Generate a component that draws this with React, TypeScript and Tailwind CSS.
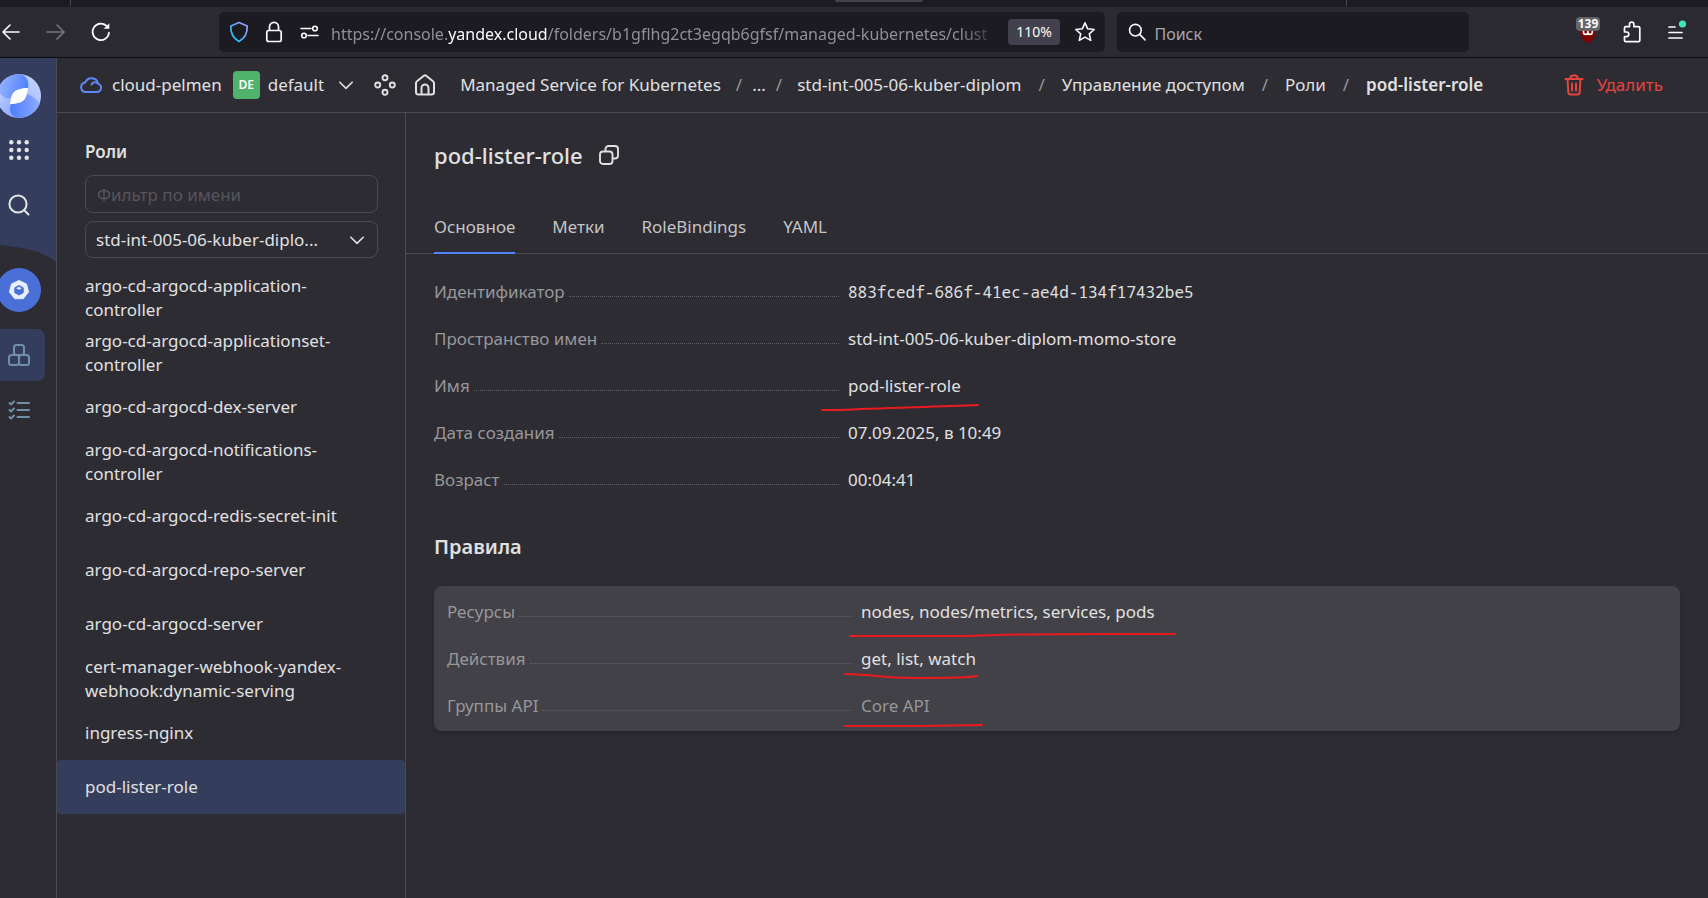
import React, { ReactNode } from "react";

const roles = [
  { name: "argo-cd-argocd-application-controller", long: true },
  { name: "argo-cd-argocd-applicationset-controller", long: true },
  { name: "argo-cd-argocd-dex-server" },
  { name: "argo-cd-argocd-notifications-controller", long: true },
  { name: "argo-cd-argocd-redis-secret-init" },
  { name: "argo-cd-argocd-repo-server" },
  { name: "argo-cd-argocd-server" },
  { name: "cert-manager-webhook-yandex-webhook:dynamic-serving", long: true },
  { name: "ingress-nginx" },
  { name: "pod-lister-role", active: true },
];

function Chevron({ size = 18 }: { size?: number }) {
  return (
    <svg width={size} height={size} viewBox="0 0 16 16" fill="none" stroke="currentColor" strokeWidth="1.4" strokeLinecap="round" strokeLinejoin="round" className="shrink-0">
      <path d="M2.5 5.5 8 11l5.5-5.5" />
    </svg>
  );
}

function Mark({ d, place }: { d: string; place: string }) {
  return (
    <svg width="332" height="10" viewBox="0 0 332 10" fill="none" stroke="#e91b1e" strokeWidth="2" strokeLinecap="round" className={`pointer-events-none absolute ${place}`} aria-hidden="true">
      <path d={d} />
    </svg>
  );
}

function Row({ label, children }: { label: string; children: ReactNode }) {
  return (
    <div className="flex h-[22px] leading-[22px]">
      <dt className="flex w-[405px] shrink-0 items-baseline gap-1 text-[#97979a]">
        {label}
        <span className="mb-[6px] h-px flex-1 self-end border-b border-dotted border-[#5f5e64]" />
      </dt>
      <dd className="relative ml-[9px]">{children}</dd>
    </div>
  );
}

function BrowserBar() {
  return (
    <header className="shrink-0 border-b border-[#0c0c0d] bg-[#2b2a33] font-['Noto_Sans',sans-serif] text-[#fbfbfe]">
      <div className="relative h-[7px] bg-[#1c1b22]">
        <div className="absolute left-[70px] top-0 h-[6px] w-px bg-[#4a4950]" />
        <div className="absolute left-[835px] top-0 h-[2px] w-[88px] rounded-b bg-[#42414d]" />
        <div className="absolute left-[1346px] top-0 h-[6px] w-px bg-[#4a4950]" />
      </div>
      <div className="flex h-[50px] items-center">
        <nav className="flex w-[219px] shrink-0 items-center gap-[25px]">
          <button aria-label="Назад">
            <svg width="20" height="20" viewBox="0 0 20 20" fill="none" stroke="currentColor" strokeWidth="1.6" strokeLinecap="round" strokeLinejoin="round"><path d="M19 10H3M10 3l-7 7 7 7" /></svg>
          </button>
          <button aria-label="Вперёд" className="text-[#77767d]">
            <svg width="20" height="20" viewBox="0 0 20 20" fill="none" stroke="currentColor" strokeWidth="1.6" strokeLinecap="round" strokeLinejoin="round"><path d="M2 10h17M12 3l7 7-7 7" /></svg>
          </button>
          <button aria-label="Обновить">
            <svg width="22" height="22" viewBox="0 0 22 22" fill="none" stroke="currentColor" strokeWidth="1.7" strokeLinecap="round" strokeLinejoin="round"><path d="M19 11.5A8.2 8.2 0 1 1 17 5.5" /><path d="M19.3 2.2v5.6h-5.6z" fill="currentColor" stroke="none" /></svg>
          </button>
        </nav>
        <div className="flex h-10 min-w-0 flex-1 items-center rounded-[5px] bg-[#1c1b22] pl-[9px] pr-[9px]">
          <svg width="22" height="22" viewBox="0 0 22 22" fill="none" className="shrink-0">
            <defs><linearGradient id="shield" x1="1" y1="0" x2="0" y2="1"><stop stopColor="#b19cff" /><stop offset=".5" stopColor="#5aa7f5" /><stop offset="1" stopColor="#00ddff" /></linearGradient></defs>
            <path d="M11 1.5 19.2 5c.3 6.5-2 12-8.2 15.500C4.800 17 2.500 11.500 2.800 5z" stroke="url(#shield)" strokeWidth="1.7" strokeLinejoin="round" />
          </svg>
          <svg width="22" height="22" viewBox="0 0 22 22" fill="none" stroke="currentColor" strokeWidth="1.7" className="ml-[13px] shrink-0"><rect x="3.8" y="9.5" width="14.4" height="11" rx="2" /><path d="M6.5 9.500V5.800a4.500 4.500 0 0 1 9 0v3.700" /></svg>
          <svg width="20" height="20" viewBox="0 0 20 20" fill="none" stroke="currentColor" strokeWidth="1.6" strokeLinecap="round" className="ml-[14px] shrink-0"><path d="M2 6.500h10M9 13.500h10" /><circle cx="16" cy="6.5" r="2.3" /><circle cx="5" cy="13.5" r="2.3" /></svg>
          <div className="ml-3 min-w-0 flex-1 overflow-hidden whitespace-nowrap pt-[3px] text-base leading-6 text-[#8f8f95] [mask-image:linear-gradient(to_right,#000_94%,transparent)]">
            https://console.<span className="text-[#fbfbfe]">yandex.cloud</span>/folders/b1gflhg2ct3egqb6gfsf/managed-kubernetes/clust
          </div>
          <button className="ml-2 h-[26px] w-[52px] shrink-0 rounded bg-[#42414d] text-sm">110%</button>
          <button aria-label="Добавить в закладки" className="ml-[14px] shrink-0">
            <svg width="22" height="22" viewBox="0 0 22 22" fill="none" stroke="currentColor" strokeWidth="1.6" strokeLinejoin="round"><path d="m11 1.800 2.700 6 6.500.7-4.900 4.400 1.400 6.500L11 16.100l-5.700 3.300 1.400-6.500L1.800 8.500l6.500-.7z" /></svg>
          </button>
        </div>
        <label className="ml-3 flex h-10 w-[352px] shrink-0 items-center rounded-[5px] bg-[#1c1b22] pl-[11px]">
          <svg width="20" height="20" viewBox="0 0 20 20" fill="none" stroke="currentColor" strokeWidth="1.7" strokeLinecap="round"><circle cx="8" cy="8" r="6.3" /><path d="m12.600 12.600 5.900 5.900" /></svg>
          <input aria-label="Поиск" placeholder="Поиск" className="ml-2 w-full bg-transparent pt-[3px] text-base outline-none placeholder:text-[#a6a6ab]" />
        </label>
        <div className="ml-[107px] flex w-[132px] shrink-0 items-center gap-[21px]">
          <button aria-label="Расширение, 139" className="relative h-7 w-6">
            <svg width="24" height="28" viewBox="0 0 24 28" fill="none"><path d="M4 10h16c.4 7-2 12-8 15.500C6 22 3.600 17 4 10z" fill="#7f0505" /><path d="M7.500 12v2.200a2.200 2.200 0 0 0 4.400 0V12m0 2.200a2.200 2.200 0 0 0 4.400 0V12" stroke="#fff" strokeWidth="1.6" /></svg>
            <span className="absolute -top-px left-0 h-[14px] w-6 rounded-sm bg-[#666] text-center text-xs font-bold leading-[14px]">139</span>
          </button>
          <button aria-label="Расширения">
            <svg width="22" height="22" viewBox="0 0 22 22" fill="none" stroke="currentColor" strokeWidth="1.7" strokeLinejoin="round"><path d="M3.500 9.500V7c0-.8.5-1.300 1.300-1.300H8.500V3.300a2.200 2.200 0 0 1 4.400 0v2.400h4.600c.8 0 1.300.5 1.300 1.300v12.400c0 .8-.5 1.300-1.300 1.300H4.800c-.8 0-1.300-.5-1.300-1.300v-3.800h2a2.300 2.300 0 0 0 0-4.600H3.500z" /></svg>
          </button>
          <button aria-label="Меню">
            <svg width="24" height="24" viewBox="0 0 24 24" fill="none" stroke="currentColor" strokeWidth="1.7" strokeLinecap="round"><path d="M5 7h6M5 12.500h13M5 18h13" /><circle cx="18.5" cy="4" r="3.6" fill="#3fe8ae" stroke="none" /></svg>
          </button>
        </div>
      </div>
    </header>
  );
}

function Rail() {
  return (
    <nav className="relative flex w-[57px] shrink-0 flex-col items-start border-r border-[#4b4a51]">
      <svg width="56" height="204" viewBox="0 0 56 204" className="absolute left-0 top-0" aria-hidden="true"><path d="M0 0h56v204C47 197 37 193 27 191 17 189 9 188 0 187z" fill="#343d5c" /></svg>
      <a href="#home" aria-label="Главная" className="relative mt-4">
        <svg width="41" height="44" viewBox="3 0 41 44">
          <defs>
            <linearGradient id="lgA" x1="0" y1="0" x2="1" y2="1"><stop stopColor="#c3d2ff" /><stop offset="1" stopColor="#86a5ff" /></linearGradient>
            <linearGradient id="lgB" x1="0" y1=".3" x2="1" y2=".5"><stop stopColor="#9db7ff" /><stop offset="1" stopColor="#4d80fa" /></linearGradient>
            <linearGradient id="lgC" x1="0" y1=".5" x2="1" y2=".5"><stop stopColor="#4d7dfb" /><stop offset="1" stopColor="#90acff" /></linearGradient>
            <linearGradient id="lgD" x1="0" y1="1" x2="1" y2="0"><stop stopColor="#8eabff" /><stop offset="1" stopColor="#c6d4ff" /></linearGradient>
            <clipPath id="disc"><circle cx="22" cy="22" r="22" /></clipPath>
          </defs>
          <g clipPath="url(#disc)">
            <path d="M0 0h44v44H0z" fill="url(#lgD)" />
            <path d="M0 14C6 4 14 0 24 0c7 3 8 8 7 14-8 0-14 3-17 9-2 4-9 2-14-9z" fill="url(#lgB)" />
            <path d="M0 14c3 8 9 12 15 10-1 6-2 13 3 20C6 42 0 34 0 22z" fill="url(#lgA)" />
            <path d="M44 30c-6 10-14 14-24 14-7-3-8-8-6-14 8 0 14-4 16-10 4 1 9 5 14 10z" fill="url(#lgC)" />
          </g>
          <path d="M31 14c-8 0-14 2-16 7-1 3-1.500 6-2 9 8 0 14-2 16-7 1-3 1.500-6 2-9z" fill="#fff" />
        </svg>
      </a>
      <button aria-label="Все сервисы" className="relative ml-2 mt-[21px]">
        <svg width="22" height="22" viewBox="0 0 22 22" fill="#e4e4e6">
          {[3.3, 11, 18.7].map((y) => [3.3, 11, 18.7].map((x) => <circle key={`${x}-${y}`} cx={x} cy={y} r="2.2" />))}
        </svg>
      </button>
      <button aria-label="Поиск по консоли" className="relative ml-2 mt-[33px]">
        <svg width="22" height="22" viewBox="0 0 22 22" fill="none" stroke="#e4e4e6" strokeWidth="2" strokeLinecap="round"><circle cx="10" cy="10" r="8.6" /><path d="m16.300 16.300 4.200 4.200" /></svg>
      </button>
      <a href="#kubernetes" aria-label="Managed Service for Kubernetes" className="mt-[52px]">
        <svg width="41" height="44" viewBox="3 0 41 44"><circle cx="22" cy="22" r="22" fill="#4a70d8" /><path d="m22 12.500 7.500 3.500 2 8-5.200 6.700h-8.600L12.500 24l2-8z" fill="#e9eefc" stroke="#e9eefc" strokeLinejoin="round" /><path d="m22 17.500 4.200 2.300v4.900L22 27l-4.200-2.300v-4.900z" fill="#4a70d8" stroke="#4a70d8" strokeLinejoin="round" /><path d="m22 18.800 2.800 1.500L22 21.800l-2.800-1.500z" fill="#e9eefc" /></svg>
      </a>
      <a href="#cluster" aria-label="Кластеры" className="mt-[17px] flex h-[52px] w-[45px] items-center rounded-r-lg bg-[#343d5c] pl-[7px]">
        <svg width="24" height="24" viewBox="0 0 24 24" fill="none" stroke="#6f90a8" strokeWidth="2"><rect x="7" y="2" width="10" height="10" rx="2.5" /><rect x="2" y="12" width="10" height="10" rx="2.5" /><rect x="12" y="12" width="10" height="10" rx="2.5" /></svg>
      </a>
      <a href="#operations" aria-label="Операции" className="ml-2 mt-[18px]">
        <svg width="22" height="22" viewBox="0 0 22 22" fill="none" stroke="#6f90a8" strokeWidth="2" strokeLinecap="round" strokeLinejoin="round"><path d="M9.500 4h11.500M9.500 11h11.500M9.500 18h11.500M1.500 4l1.500 1.500L6 2.500M1.500 11l1.500 1.500L6 9.500M1.500 18l1.500 1.500L6 16.500" /></svg>
      </a>
    </nav>
  );
}

function Slash() {
  return <span className="text-[#97979a]">/</span>;
}

function TopBar() {
  return (
    <div className="flex h-[55px] shrink-0 items-center whitespace-nowrap border-b border-[#4b4a51] pl-[22px] pr-[45px]">
      <svg width="24" height="22" viewBox="0 0 24 22" fill="none" stroke="#5c88f5" strokeWidth="2" strokeLinecap="round" strokeLinejoin="round" className="shrink-0"><path d="M6.200 18h11.500a4.300 4.300 0 0 0 1.300-8.400A6.600 6.600 0 0 0 6.300 8.500 4.800 4.800 0 0 0 6.200 18z" /><path d="M12.500 10.500a4 4 0 0 1 6.500-.9" /></svg>
      <a href="#cloud" className="ml-[9px]">cloud-pelmen</a>
      <span className="ml-[11px] flex h-7 w-[27px] shrink-0 items-center justify-center rounded bg-[#50b36c] text-xs font-semibold text-white">DE</span>
      <button className="ml-2 flex items-center gap-[13px]">default <Chevron /></button>
      <button aria-label="Ресурсы" className="ml-[19px] shrink-0">
        <svg width="22" height="22" viewBox="0 0 22 22" fill="none" stroke="currentColor" strokeWidth="1.9"><circle cx="11" cy="3.7" r="2.5" /><circle cx="11" cy="18.3" r="2.5" /><circle cx="3.7" cy="11" r="2.5" /><circle cx="18.3" cy="11" r="2.5" /></svg>
      </button>
      <a href="#root" aria-label="Начало" className="ml-[18px] shrink-0">
        <svg width="22" height="22" viewBox="0 0 22 22" fill="none" stroke="currentColor" strokeWidth="2" strokeLinejoin="round"><path d="M2 9.200c0-.8.3-1.500 1-2L9.800 1.800c.7-.5 1.700-.5 2.400 0L19 7.200c.7.500 1 1.200 1 2V18a2.500 2.500 0 0 1-2.500 2.500h-13A2.500 2.500 0 0 1 2 18z" /><path d="M7.500 20.500V14a3.500 3.500 0 0 1 7 0v6.500" /></svg>
      </a>
      <nav className="ml-6 flex items-center">
        <a href="#service">Managed Service for Kubernetes</a>
        <span className="mx-[15px] flex gap-[10px]"><Slash /><button>...</button><Slash /></span>
        <a href="#diplom">std-int-005-06-kuber-diplom</a>
        <span className="mx-[17px]"><Slash /></span>
        <a href="#access">Управление доступом</a>
        <span className="mx-[17px]"><Slash /></span>
        <a href="#roles">Роли</a>
        <span className="mx-[17px]"><Slash /></span>
        <a href="#role" className="font-semibold">pod-lister-role</a>
      </nav>
      <button className="ml-auto flex items-center gap-[13px] text-[#e5453f]">
        <svg width="20" height="22" viewBox="0 0 20 22" fill="none" stroke="currentColor" strokeWidth="2" strokeLinecap="round" strokeLinejoin="round"><path d="M1.500 5h17M6.500 5V4a2.500 2.500 0 0 1 2.500-2.500h2A2.500 2.500 0 0 1 13.500 4v1M3.500 5l.8 13a2.500 2.500 0 0 0 2.500 2.500h6.400a2.500 2.500 0 0 0 2.500-2.500l.8-13M8 9.500v7M12 9.500v7" /></svg>
        Удалить
      </button>
    </div>
  );
}

function Sidebar() {
  return (
    <aside className="w-[349px] shrink-0 border-r border-[#4b4a51]">
      <h2 className="px-7 pt-7 font-semibold leading-[22px]">Роли</h2>
      <div className="flex flex-col gap-2 pl-7 pr-[27px] pt-3">
        <input aria-label="Фильтр по имени" placeholder="Фильтр по имени" className="h-[38px] w-full rounded-lg border border-[#4b4a51] bg-transparent px-[11px] outline-none placeholder:text-[#56555c]" />
        <div className="relative">
          <select aria-label="Пространство имен" className="h-[37px] w-full appearance-none truncate rounded-lg border border-[#4b4a51] bg-transparent pl-[10px] pr-12 outline-none">
            <option>std-int-005-06-kuber-diplo...</option>
          </select>
          <span className="pointer-events-none absolute right-3 top-[10px]"><Chevron /></span>
        </div>
      </div>
      <ul className="mt-3">
        {roles.map((r) => (
          <li key={r.name}>
            <a href={`#${r.name}`} className={`flex items-center pl-7 pr-12 leading-6 ${r.long ? "h-[55px]" : "h-[54px]"} ${r.active ? "rounded bg-[#343d5c]" : ""}`}>
              {r.name}
            </a>
          </li>
        ))}
      </ul>
    </aside>
  );
}

function Details() {
  const tabs = ["Основное", "Метки", "RoleBindings", "YAML"];
  return (
    <main className="min-w-0 flex-1">
      <div className="flex items-center gap-4 px-7 pt-[27px]">
        <h1 className="text-[22px] font-medium leading-[30px]">pod-lister-role</h1>
        <button aria-label="Скопировать">
          <svg width="20" height="20" viewBox="0 0 20 20" fill="none" stroke="currentColor" strokeWidth="1.9"><rect x="1" y="6.5" width="12.5" height="12.5" rx="3" /><path d="M6.500 6.500V4a3 3 0 0 1 3-3H16a3 3 0 0 1 3 3v6.500a3 3 0 0 1-3 3h-2.500" /></svg>
        </button>
      </div>
      <div role="tablist" className="mt-7 flex gap-[37px] border-b border-[#4b4a51] px-7">
        {tabs.map((t, i) => (
          <button key={t} role="tab" aria-selected={i === 0} className={`-mb-px h-[56px] border-b-2 pt-1 text-[#c4c4c6] ${i === 0 ? "border-[#5282ff]" : "border-transparent"}`}>{t}</button>
        ))}
      </div>
      <dl className="flex flex-col gap-[25px] px-7 pt-[27px]">
        <Row label="Идентификатор"><span className="font-['Noto_Sans_Mono','DejaVu_Sans_Mono',monospace] text-base leading-[22px]">883fcedf-686f-41ec-ae4d-134f17432be5</span></Row>
        <Row label="Пространство имен">std-int-005-06-kuber-diplom-momo-store</Row>
        <Row label="Имя">pod-lister-role<Mark place="-left-7 top-7" d="M2 7H20C60 5 110 4 158 2" /></Row>
        <Row label="Дата создания">07.09.2025, в 10:49</Row>
        <Row label="Возраст">00:04:41</Row>
      </dl>
      <h2 className="px-7 pt-[42px] text-xl font-semibold leading-7">Правила</h2>
      <dl className="mx-7 mt-[25px] flex flex-col gap-[25px] rounded-lg bg-[#424147] px-[13px] pb-[14px] pt-[15px] shadow-md">
        <Row label="Ресурсы">nodes, nodes/metrics, services, pods<Mark place="-left-[13px] top-[30px]" d="M2 5H120C180 2 250 3 327 3" /></Row>
        <Row label="Действия">get, list, watch<Mark place="-left-[18px] top-6" d="M2 2C25 2 40 6 70 6S125 6 134 4" /></Row>
        <Row label="Группы API"><span className="text-[#97979a]">Core API</span><Mark place="-left-[18px] top-[26px]" d="M2 5H80L139 4" /></Row>
      </dl>
    </main>
  );
}

export default function App() {
  return (
    <div className="flex min-h-screen flex-col bg-[#2d2c33] font-['Noto_Sans',sans-serif] text-[17px] text-[#e0e0e1]">
      <BrowserBar />
      <div className="flex flex-1">
        <Rail />
        <div className="flex min-w-0 flex-1 flex-col">
          <TopBar />
          <div className="flex flex-1">
            <Sidebar />
            <Details />
          </div>
        </div>
      </div>
    </div>
  );
}
